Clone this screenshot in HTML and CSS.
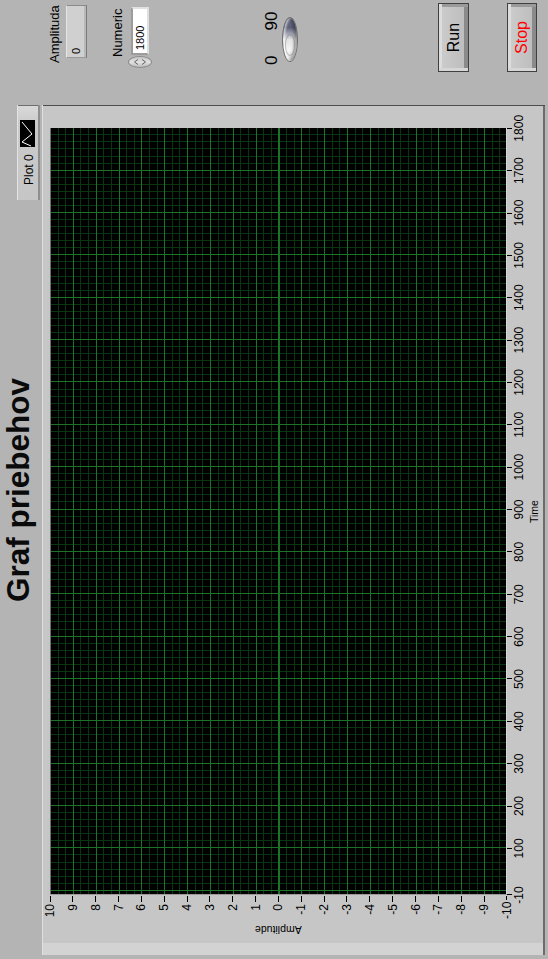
FILE: index.html
```html
<!DOCTYPE html>
<html lang="sk">
<head>
<meta charset="utf-8">
<title>Graf priebehov</title>
<link rel="stylesheet" href="styles.css">
</head>
<body>
<div class="screen">
<div class="panel">
  <section class="graph-area">
    <header class="graph-head">
      <h1 class="title">Graf priebehov</h1>
      <div class="legend">
        <span class="legend-name">Plot 0</span>
        <span class="legend-swatch"><svg width="27" height="15" viewBox="0 0 27 15"><polyline points="1,11 5,2 13,12 25,2" fill="none" stroke="#fff" stroke-width="1"/></svg></span>
      </div>
    </header>
    <div class="frame">
      <div class="y-axis">
        <div class="y-title"><span>Amplitude</span></div>
        <ul class="y-scale">
          <li><span>10</span></li><li><span>9</span></li><li><span>8</span></li><li><span>7</span></li><li><span>6</span></li><li><span>5</span></li><li><span>4</span></li><li><span>3</span></li><li><span>2</span></li><li><span>1</span></li><li><span>0</span></li><li><span>-1</span></li><li><span>-2</span></li><li><span>-3</span></li><li><span>-4</span></li><li><span>-5</span></li><li><span>-6</span></li><li><span>-7</span></li><li><span>-8</span></li><li><span>-9</span></li><li><span>-10</span></li>
        </ul>
      </div>
      <div class="plot"></div>
      <div class="x-axis">
        <ul class="x-scale">
          <li><span>-10</span></li><li class="x-gap"></li><li><span>100</span></li><li><span>200</span></li><li><span>300</span></li><li><span>400</span></li><li><span>500</span></li><li><span>600</span></li><li><span>700</span></li><li><span>800</span></li><li><span>900</span></li><li><span>1000</span></li><li><span>1100</span></li><li><span>1200</span></li><li><span>1300</span></li><li><span>1400</span></li><li><span>1500</span></li><li><span>1600</span></li><li><span>1700</span></li><li><span>1800</span></li>
        </ul>
        <div class="x-title">Time</div>
      </div>
    </div>
  </section>
  <aside class="controls">
    <div class="ctl-label amp-label">Amplituda</div>
    <div class="indicator">0</div>
    <div class="ctl-label num-label">Numeric</div>
    <div class="numeric">
      <span class="incdec"><svg width="10" height="22" viewBox="0 0 10 22"><path d="M2.5 9 L5 5.5 L7.5 9" fill="none" stroke="#666" stroke-width="1"/><path d="M2.5 13 L5 16.5 L7.5 13" fill="none" stroke="#666" stroke-width="1"/></svg></span>
      <span class="num-field">1800</span>
    </div>
    <div class="slide-scale"><span>0</span><span>90</span></div>
    <div class="slide"><span class="slide-thumb"></span></div>
    <button class="btn run" type="button">Run</button>
    <button class="btn stop" type="button">Stop</button>
  </aside>
</div>
</div>
</body>
</html>
```
FILE: styles.css
```css
html, body {
  margin: 0;
  padding: 0;
  width: 548px;
  height: 959px;
  overflow: hidden;
  background: #b4b4b4;
}

.screen {
  width: 548px;
  height: 959px;
  overflow: hidden;
}

.panel {
  width: 959px;
  height: 548px;
  display: flex;
  align-items: flex-start;
  transform-origin: 0 0;
  transform: translateY(959px) rotate(-90deg);
  font-family: "Liberation Sans", Arial, sans-serif;
  color: #000;
  background: #b4b4b4;
}

/* ---------- graph ---------- */
.graph-area {
  margin-left: 4px;
  width: 850px;
  flex: none;
  display: flex;
  flex-direction: column;
}

.graph-head {
  height: 42px;
  display: flex;
  align-items: flex-start;
}

.title {
  margin: 0 0 0 353px;
  font-size: 31.5px;
  line-height: 37px;
  font-weight: bold;
  color: #0a0a0a;
  white-space: nowrap;
}

.legend {
  margin-left: auto;
  margin-top: 17px;
  width: 95px;
  height: 23px;
  box-sizing: border-box;
  display: flex;
  align-items: center;
  padding-left: 15px;
  background: linear-gradient(to right, #c6c6c6 0%, #cacaca 80%, #dadada 100%);
  box-shadow: inset 0 1px #e4e4e4, inset 0 -2px #8e8e8e, inset -1px 0 #6e6e6e;
}

.legend-name {
  font-family: "Liberation Sans Narrow", "Liberation Sans", sans-serif;
  font-size: 12px;
  line-height: 12px;
  width: 38px;
  white-space: nowrap;
}

.legend-swatch {
  width: 27px;
  height: 15px;
  background: #000;
  display: block;
  margin-top: -2px;
}

.legend-swatch svg {
  display: block;
}

.frame {
  height: 503px;
  box-sizing: border-box;
  background: #c6c6c6;
  display: grid;
  grid-template-columns: 60px 767px 1fr;
  grid-template-rows: 8px 457px 1fr;
  box-shadow: inset 0 1px #e0e0e0, inset -1px 0 #4c4c4c, inset 0 -2px #6c6c6c, inset 12px 0 #d3d3d3;
}

.y-axis {
  grid-column: 1;
  grid-row: 2;
  display: flex;
}

.y-title {
  width: 36px;
  box-sizing: border-box;
  padding-left: 19px;
  display: flex;
  align-items: center;
}

.y-title span {
  writing-mode: vertical-rl;
  transform: rotate(180deg);
  font-size: 10.5px;
  line-height: 12px;
  white-space: nowrap;
}

.y-scale {
  list-style: none;
  margin: -6px 0 0 0;
  padding: 0;
  width: 24px;
  height: 469px;
  display: flex;
  flex-direction: column;
  justify-content: space-between;
}

.y-scale li {
  height: 12px;
  display: flex;
  justify-content: flex-end;
  align-items: center;
  font-family: "Liberation Sans Narrow", "Liberation Sans", sans-serif;
  font-size: 12px;
  line-height: 12px;
}

.y-scale li::after {
  content: "";
  width: 6px;
  height: 1px;
  background: #000;
  margin-left: 2px;
  margin-right: 1px;
}

.plot {
  grid-column: 2;
  grid-row: 2;
  background-color: #000;
  background-image:
    repeating-linear-gradient(to right, transparent 0 4.24px, #1b7329 4.24px 5.24px, transparent 5.24px 42.36px),
    repeating-linear-gradient(to bottom, #1b7329 0 1px, transparent 1px 22.85px),
    repeating-linear-gradient(to right, transparent 0 4.24px, #093510 4.24px 5.24px, transparent 5.24px 7.06px),
    repeating-linear-gradient(to bottom, #093510 0 1px, transparent 1px 7.617px);
  box-shadow: inset 1px 0 #9a9a9a, inset 0 -1px #d8d8d8, inset 0 1px #707070;
}

.x-axis {
  grid-column: 2;
  grid-row: 3;
  display: flex;
  flex-direction: column;
}

.x-scale {
  list-style: none;
  margin: 0 0 0 -21.18px;
  padding: 0;
  display: flex;
}

.x-scale li {
  flex: none;
  width: 42.36px;
  display: flex;
  flex-direction: column;
  align-items: center;
  font-family: "Liberation Sans Narrow", "Liberation Sans", sans-serif;
  font-size: 12px;
  line-height: 12px;
}

.x-scale li::before {
  content: "";
  width: 1px;
  height: 5px;
  background: #000;
  margin-bottom: 1px;
}

.x-scale li.x-gap {
  width: 4.24px;
}

.x-scale li.x-gap::before {
  display: none;
}

.x-title {
  margin-top: 3px;
  text-align: center;
  font-size: 10.5px;
  line-height: 12px;
}

/* ---------- controls ---------- */
.controls {
  flex: none;
  margin-left: 33px;
  width: 72px;
  display: flex;
  flex-direction: column;
  align-items: flex-start;
}

.ctl-label {
  font-size: 13px;
  line-height: 13px;
  white-space: nowrap;
}

.amp-label {
  margin-top: 48px;
  margin-left: 9px;
}

.indicator {
  margin-top: 5px;
  margin-left: 14px;
  width: 53px;
  height: 21px;
  box-sizing: border-box;
  padding-left: 3px;
  font-size: 11px;
  line-height: 19px;
  background: #d0d0d0;
  border: 1px solid;
  border-color: #e6e6e6 #8a8a8a #7a7a7a #9a9a9a;
  box-shadow: inset 0 -2px #b8b8b8;
}

.num-label {
  margin-top: 24px;
  margin-left: 15px;
}

.numeric {
  margin-top: 4px;
  margin-left: 4px;
  height: 24px;
  display: flex;
  align-items: center;
}

.incdec {
  width: 12px;
  height: 24px;
  box-sizing: border-box;
  border: 1px solid #8c8c8c;
  border-radius: 50%;
  background: linear-gradient(to right, #bdbdbd, #e2e2e2 50%, #c4c4c4);
  display: flex;
  align-items: center;
  justify-content: center;
}

.incdec svg {
  display: block;
}

.num-field {
  margin-left: 1px;
  width: 48px;
  height: 18px;
  box-sizing: border-box;
  background: #fff;
  border: 2px solid;
  border-color: #9c9c9c #e0e0e0 #e0e0e0 #9c9c9c;
  padding-left: 3px;
  font-size: 11px;
  line-height: 14px;
}

.slide-scale {
  margin-top: 111px;
  margin-left: 7px;
  display: flex;
  gap: 25px;
  font-size: 17px;
  line-height: 17px;
}

.slide {
  margin-top: 2px;
  margin-left: 10px;
  width: 45px;
  height: 16px;
  box-sizing: border-box;
  border: 1px solid #707070;
  border-radius: 50%;
  background: linear-gradient(to right, #d8d8d8 0%, #f6f6f6 25%, #e2e2e2 50%, #a9abb8 62%, #5d6079 78%, #6f7289 100%);
  box-shadow: inset 0 2px 2px rgba(255, 255, 255, 0.55), inset 0 -3px 3px rgba(0, 0, 0, 0.3);
  display: flex;
  align-items: center;
}

.slide-thumb {
  margin-left: 5px;
  width: 20px;
  height: 8px;
  border-radius: 50%;
  border: 1px solid rgba(120, 120, 120, 0.45);
}

.btn {
  width: 69px;
  height: 31px;
  padding: 0;
  box-sizing: border-box;
  font-family: "Liberation Sans", Arial, sans-serif;
  font-size: 16px;
  color: #000;
  border: 1px solid #404040;
  background: linear-gradient(to bottom, #cdcdcd 0%, #c4c4c4 50%, #bcbcbc 100%);
  box-shadow: inset 3px 0 #d6d6d6, inset 0 3px #dcdcdc, inset -3px 0 #9a9a9a, inset 0 -4px #8a8a8a;
}

.run {
  margin-top: 140px;
}

.stop {
  margin-top: 38px;
  height: 30px;
  color: #ff0000;
}
```
